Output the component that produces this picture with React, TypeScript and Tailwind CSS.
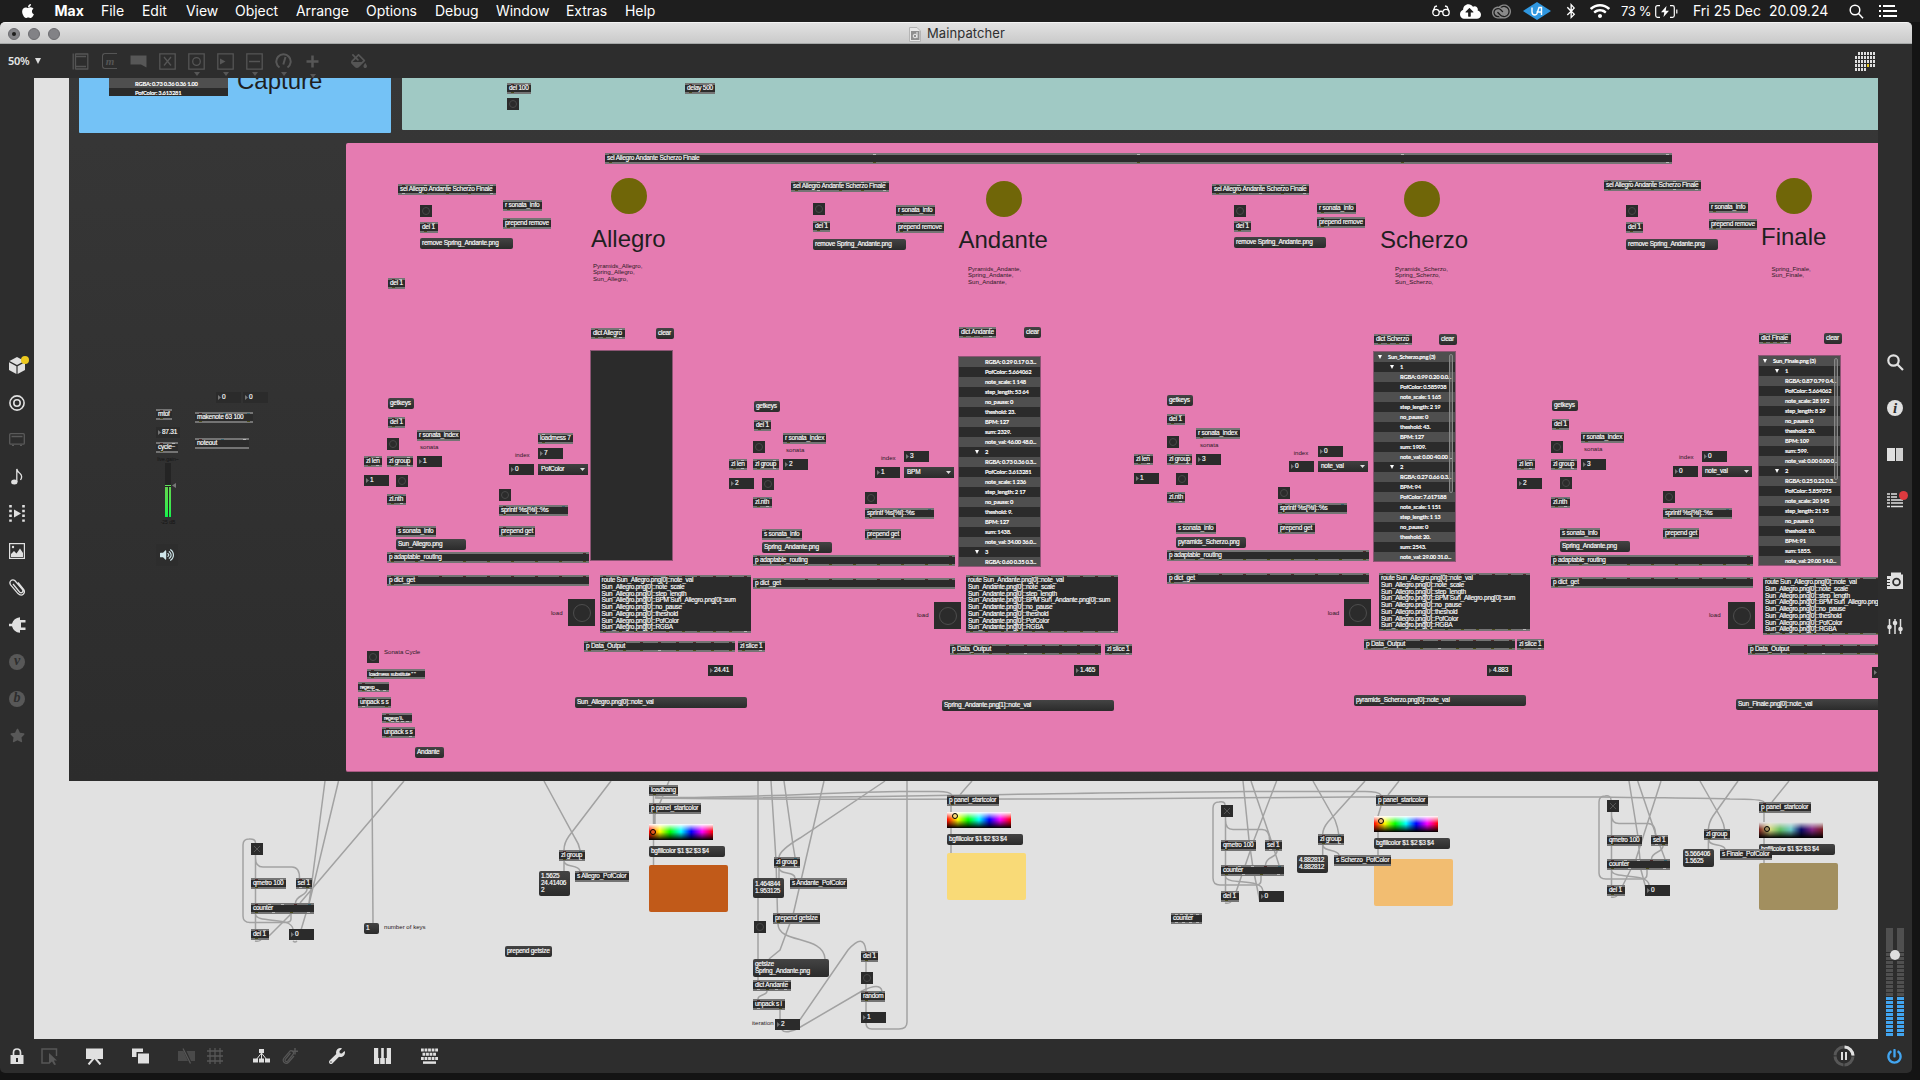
import React from "react";
import {
  FaApple, FaBluetoothB, FaWifi, FaStar, FaWrench, FaPowerOff, FaVolumeUp, FaCloudUploadAlt, FaFillDrip,
} from "react-icons/fa";
import { SiAdobecreativecloud } from "react-icons/si";

/* ---------- patch data ---------- */

type Kind = "obj" | "msg" | "num" | "bang" | "toggle" | "menu" | "note";
interface Item {
  k: Kind;
  x: number;
  y: number;
  w: number;
  h: number;
  t: string;
  ins: string;
  outs: string;
  small?: boolean;
}

const o = (x: number, y: number, w: number, t: string, ins = "h", outs = "y", h = 11, small = false): Item => ({ k: "obj", x, y, w, h, t, ins, outs, small });
const m = (x: number, y: number, w: number, t: string, h = 11): Item => ({ k: "msg", x, y, w, h, t, ins: "", outs: "" });
const n = (x: number, y: number, t: string, w = 25): Item => ({ k: "num", x, y, w, h: 11, t, ins: "", outs: "" });
const b = (x: number, y: number, s = 12): Item => ({ k: "bang", x, y, w: s, h: s, t: "", ins: "", outs: "" });
const tg = (x: number, y: number): Item => ({ k: "toggle", x, y, w: 12, h: 12, t: "", ins: "", outs: "" });
const u = (x: number, y: number, t: string): Item => ({ k: "menu", x, y, w: 50, h: 11, t, ins: "", outs: "" });
const c = (x: number, cy: number, t: string): Item => ({ k: "note", x, y: cy - 3, w: 90, h: 7, t, ins: "", outs: "" });

const SEL = "sel Allegro Andante Scherzo Finale";
const REM = "remove Spring_Andante.png";
const route = (name: string) =>
  [
    `route Sun_${name}.png[0]::note_val`,
    `Sun_${name}.png[0]::note_scale`,
    `Sun_${name}.png[0]::step_length`,
    `Sun_${name}.png[0]::BPM Sun_${name}.png[0]::sum`,
    `Sun_${name}.png[0]::no_pause`,
    `Sun_${name}.png[0]::theshold`,
    `Sun_${name}.png[0]::PofColor`,
    `Sun_${name}.png[0]::RGBA`,
  ].join("\n");

const H9 = "hhhhhhhhh";
const H10 = "hhhhhhhhhh";
const Y9 = "yyyyyyyyy";
const YD = "yyyycyyyy";
const Y10 = "yyyyyyyyyc";

const items: Item[] = [
  // top strip
  o(507, 83, 24, "del 100", "hc"), b(507, 98), o(685, 83, 30, "delay 500", "hc"),
  o(605, 153, 1067, SEL, "hcccc", "yyyyc"),

  // selectors
  o(398, 184, 98, SEL, "hcccc", "cyyyc"), b(420, 205), o(420, 222, 18, "del 1", "hc"), m(420, 238, 93, REM),
  o(503, 200, 39, "r sonata_info", ""), o(503, 218, 48, "prepend remove"), o(388, 278, 17, "del 1", "hc"),
  o(791, 181, 98, SEL, "hcccc", "ycyyc"), b(813, 203), o(813, 221, 17, "del 1", "hc"), m(813, 239, 93, REM),
  o(896, 205, 39, "r sonata_info", ""), o(896, 222, 48, "prepend remove"),
  o(1212, 184, 97, SEL, "hcccc", "yycyc"), b(1234, 205), o(1234, 221, 17, "del 1", "hc"), m(1234, 237, 92, REM),
  o(1317, 203, 39, "r sonata_info", ""), o(1317, 217, 48, "prepend remove"),
  o(1604, 180, 97, SEL, "hcccc", "yyycc"), b(1626, 205), o(1626, 222, 17, "del 1", "hc"), m(1626, 239, 92, REM),
  o(1709, 202, 39, "r sonata_info", ""), o(1709, 219, 48, "prepend remove"),

  // dictionaries
  o(591, 328, 34, "dict Allegro", "hc", "yyyc"), m(656, 328, 17.5, "clear"),
  o(959, 327, 36.5, "dict Andante", "hc", "yyyc"), m(1024, 327, 17, "clear"),
  o(1374, 334, 38, "dict Scherzo", "hc", "yyyc"), m(1439, 334, 17.5, "clear"),
  o(1759, 333, 32, "dict Finale", "hc", "yyyc"), m(1824, 333, 17.5, "clear"),
  c(593, 265.7, "Pyramids_Allegro,\nSpring_Allegro,\nSun_Allegro,"),
  c(968, 268.5, "Pyramids_Andante,\nSpring_Andante,\nSun_Andante,"),
  c(1395, 268.5, "Pyramids_Scherzo,\nSpring_Scherzo,\nSun_Scherzo,"),
  c(1771.5, 268.5, "Spring_Finale,\nSun_Finale,"),

  // synth
  n(216, 392, "0"), n(243, 392, "0"), o(156, 409, 16, "mtof"), o(195, 412, 58, "makenote 63 100", "hbb", "yy"),
  n(156, 427, "87.31", 24), o(195, 438, 54, "noteout", "hbc", ""), o(156, 442, 22, "cycle~", "hc"),

  // column 1
  m(388, 398, 26, "getkeys"), o(388, 417, 17, "del 1", "hc"), o(417, 430, 43, "r sonata_index", ""), b(387, 438),
  c(420, 447, "sonata"), o(364, 456, 18, "zl len", "hc", "yc"), o(387, 456, 26, "zl group", "hc", "yc"), n(417, 456, "1"),
  n(364, 475, "1"), b(396, 475), o(387, 494, 19, "zl.nth", "hb", "yc"),
  o(538, 433, 35, "loadmess 7", "c"), n(538, 448, "7"), c(515, 455.3, "index"), n(509, 464, "0"), u(538, 464, "PofColor"),
  b(499, 489), o(499, 505, 69, "sprintf %s[%i]::%s", "hbb"), o(499, 526, 36, "prepend get"), o(396, 526, 40, "s sonata_info", "h", ""),
  m(396, 539, 70, "Sun_Allegro.png"), o(387, 552, 202, "p adaptable_routing", "hh", Y9), o(387, 575, 202, "p dict_get", H9),
  c(551, 612.7, "load"), b(568, 599, 27), o(599.5, 575, 151.5, route("Allegro"), H10, Y10, 58),
  o(584, 641, 151, "p Data_Output", H9, YD), o(738, 641, 27, "zl slice 1", "hc", "yc"), n(708, 665, "24.41"),
  m(575, 697, 172, "Sun_Allegro.png[0]::note_val"),
  b(367, 651), c(384, 652.3, "Sonata Cycle"), o(367, 669, 58, 'loadmess substitute " "', "h", "y", 10, true),
  o(358, 682, 31, "regexp _", "h", "ycccc", 10, true), o(358, 697, 33, "unpack s s", "h", "cy"),
  o(382, 713, 30, "regexp \\\\.", "h", "ycccc", 10, true), o(382, 727, 33, "unpack s s", "h", "yc"), m(415, 747, 29, "Andante"),

  // column 2
  m(754, 401, 26, "getkeys"), o(754, 420, 17, "del 1", "hc"), b(753, 441), o(783, 433, 43, "r sonata_index", ""),
  c(786, 450.3, "sonata"), o(729, 459, 18, "zl len", "hc", "yc"), o(753, 459, 26, "zl group", "hc", "yc"), n(783, 459, "2"),
  n(729, 478, "2"), b(762, 478), o(753, 497, 19, "zl.nth", "hb", "yc"),
  o(762, 529, 40, "s sonata_info", "h", ""), m(762, 542, 70, "Spring_Andante.png"),
  o(753, 555, 202, "p adaptable_routing", "hh", Y9), o(753, 578, 202, "p dict_get", H9),
  c(881, 458.3, "index"), n(904, 451, "3"), n(875, 467, "1"), u(904, 467, "BPM"), b(865, 492),
  o(865, 508, 69, "sprintf %s[%i]::%s", "hbb"), o(865, 529, 36, "prepend get"), c(917, 614.7, "load"), b(934, 602, 27),
  o(966, 575, 151.5, route("Andante"), H10, Y10, 58), o(950, 644, 151, "p Data_Output", H9, YD),
  o(1105, 644, 27, "zl slice 1", "hc", "yc"), n(1074, 665, "1.465"), m(942, 700, 172, "Spring_Andante.png[1]::note_val"),

  // column 3
  m(1167, 395, 26, "getkeys"), o(1167, 414, 18, "del 1", "hc"), b(1167, 436), o(1196, 428, 44, "r sonata_index", ""),
  c(1200, 445.3, "sonata"), o(1134, 454, 19, "zl len", "hc", "yc"), o(1167, 454, 25, "zl group", "hc", "yc"), n(1196, 454, "3"),
  n(1134, 473, "1"), b(1176, 473), o(1167, 492, 18, "zl.nth", "hb", "yc"),
  c(1293.7, 453.3, "index"), n(1318, 446, "0"), n(1289, 461, "0"), u(1318, 461, "note_val"), b(1278, 487),
  o(1278, 503, 69, "sprintf %s[%i]::%s", "hbb"), o(1278, 523, 37, "prepend get"), o(1176, 523, 40, "s sonata_info", "h", ""),
  m(1176, 537, 70, "pyramids_Scherzo.png"), o(1167, 550, 202, "p adaptable_routing", "hh", Y9), o(1167, 573, 202, "p dict_get", H9),
  c(1327.7, 613.3, "load"), b(1344, 599, 27), o(1379, 573, 151, route("Allegro"), H10, Y10, 58),
  o(1364, 639, 151, "p Data_Output", H9, YD), o(1517, 639, 27, "zl slice 1", "hc", "yc"), n(1487, 665, "4.883"),
  m(1354, 695, 172, "pyramids_Scherzo.png[0]::note_val"),

  // column 4
  m(1552, 400, 26, "getkeys"), o(1552, 419, 17, "del 1", "hc"), b(1551, 441), o(1581, 432, 43, "r sonata_index", ""),
  c(1584, 449.3, "sonata"), o(1517, 459, 18, "zl len", "hc", "yc"), o(1551, 459, 26, "zl group", "hc", "yc"), n(1581, 459, "3"),
  n(1517, 478, "2"), b(1560, 477), o(1551, 497, 19, "zl.nth", "hb", "yc"),
  o(1560, 528, 40, "s sonata_info", "h", ""), m(1560, 541, 70, "Spring_Andante.png"),
  o(1551, 555, 202, "p adaptable_routing", "hh", Y9), o(1551, 577, 202, "p dict_get", H9),
  c(1679, 457.3, "index"), n(1702, 451, "0"), n(1673, 466, "0"), u(1702, 466, "note_val"), b(1663, 491),
  o(1663, 508, 69, "sprintf %s[%i]::%s", "hbb"), o(1663, 528, 36, "prepend get"), c(1709, 614.7, "load"), b(1728, 602, 27),
  o(1763, 577, 151, route("Allegro"), H10, Y10, 58), o(1748, 644, 151, "p Data_Output", H9, YD), n(1872, 667, ""),
  m(1736, 699, 172, "Sun_Finale.png[0]::note_val"),

  // lower patch, left
  tg(251, 843), o(251, 878, 35, "qmetro 100", "hc"), o(295.5, 878, 16.5, "sel 1", "hc", "cy"),
  o(251, 903, 63, "counter", "hcchb", "ycyc"), o(251, 929, 18, "del 1", "hc"), n(289, 929, "0"),
  m(364, 923, 15, "1"), c(384, 927.3, "number of keys"),
  o(559, 850, 26, "zl group", "hb", "yc"), m(539, 871, 30.5, "1.5625\n24.41406\n2", 24.5), o(575, 871, 54, "s Allegro_PofColor", "h", ""),
  m(505, 946, 47, "prepend getsize"),
  o(649, 785, 29, "loadbang", ""), o(649, 803, 52, "p panel_startcolor"), m(649, 846, 76, "bgfillcolor $1 $2 $3 $4"),
  o(774, 857, 26, "zl group", "hb", "yc"), m(753, 878, 31, "1.464844\n1.953125", 20), o(790, 878, 57, "s Andante_PofColor", "h", ""),
  o(773, 913, 47, "prepend getsize"), b(754, 921), m(753, 959, 76, "getsize\nSpring_Andante.png", 17.5),
  o(753, 980, 38, "dict Andante", "hc", "cycc"), o(753, 999, 32, "unpack s i", "h", "cy"), c(752, 1023.3, "iteration"), n(775, 1019, "2"),
  o(861, 951, 17, "del 1", "hc"), b(861, 972), o(861, 991, 24, "random", "hb"), n(861, 1012, "1"),
  o(947, 795, 52, "p panel_startcolor"), m(947, 834, 76, "bgfillcolor $1 $2 $3 $4"),

  // lower patch, right
  tg(1221, 805), o(1221, 840, 35, "qmetro 100", "hc"), o(1265, 840, 17, "sel 1", "hc", "cy"),
  o(1221, 865, 63, "counter", "hcchb", "ycyc"), o(1221, 891, 18, "del 1", "hc"), n(1258.5, 891, "0"),
  o(1171, 913, 31, "counter", "ccccc", "cccc"),
  o(1318, 834, 26, "zl group", "hb", "yc"), m(1297, 855, 31, "4.882812\n4.882812", 17.5),
  o(1376, 795, 52, "p panel_startcolor"), m(1374, 838, 76, "bgfillcolor $1 $2 $3 $4"), o(1334, 855, 57, "s Scherzo_PofColor", "h", ""),
  tg(1607, 800), o(1607, 835, 35, "qmetro 100", "hc"), o(1651, 835, 17, "sel 1", "hc", "cy"),
  o(1607, 859, 63, "counter", "hcchb", "ycyc"), o(1607, 885, 18, "del 1", "hc"), n(1645, 885, "0"),
  o(1704, 829, 26, "zl group", "hb", "yc"), m(1683, 849, 31, "5.566406\n1.5625", 17.5),
  o(1759, 802, 52, "p panel_startcolor"), m(1759, 844, 76, "bgfillcolor $1 $2 $3 $4"), o(1720, 849, 52, "s Finale_PofColor", "h", ""),
];

const cables = [
  "M291 914V919Q291 922.5 285 922.5H250Q243 922.5 243 916V845Q243 839 249 839Q255.5 838.5 255.5 843",
  "M255.5 855V878M255.5 858Q255.5 867 263 867H292Q299.5 867 299.5 878",
  "M255.5 889V903M255.5 914V929M255.5 914C256 924 291 916 293 929",
  "M307 889C307 896 296 895 295.5 903M325 781L311 889L309 903M338.5 781L310 900L301 930M404 781L300 903M291 914L269 936",
  "M372 781L373 923M255 941Q258 942 261 940",
  "M544 781L575 838Q579 844 580 850M611 781L569 836Q564 843 564 850M564 861V871M564 861C564 868 579 864 580 871",
  "M669 781L655 815V824M653.5 796V803M653.5 814V865",
  "M655 797C700 800 850 791.5 900 791.5H938Q950 791.5 952 795",
  "M655 797.5C720 800 900 796 1100 793L1250 791.5H1365Q1379 791.5 1381 795",
  "M655 798C800 800 1000 799 1100 799L1350 797H1600C1660 798 1700 798 1730 799Q1763 799 1764 802",
  "M758 781V921M758 933V980M771 781L776 860L777.5 913M784 781L793 845L795 857M824 781L793 915L780 950L769 959",
  "M885 781L800 838Q780 850 779 857M779 868V878M779 868C779 875 795 871 795 878",
  "M778 924C778 944 824 935 825 959M767 991C767 996 758 994 758 999M780 1010V1019",
  "M782 1030Q785 1034 797 1029L862 991Q880 982 882 991M797 1024L848 950Q864 932 866 951",
  "M866 962V972M866 984V991M866 1002V1012M866 1023Q866 1029 872 1029H899Q907 1029 907 1022V781",
  "M972 781Q962 792 960 795M951 806V853",
  "M1261 876V880Q1261 885 1256 885H1220Q1213 885 1213 878V808Q1213 802 1219 802Q1225 801 1225 805",
  "M1225.5 817V840M1225.5 820Q1225.5 829.5 1233 829.5H1262Q1269.5 829.5 1269.5 840M1225.5 851V865M1225.5 876V891M1225.5 876C1226 886 1262 877 1263 891",
  "M1243 781L1249 840L1253 868L1260 902M1251 781L1270 837L1279 865M1276.6 781L1254 840L1236 892M1277 851C1277 858 1266 856 1265.5 865",
  "M1313 781L1335 820Q1338 828 1338.7 834M1365 781L1328 822Q1323 828 1322.7 834M1322.7 845V855M1323 845C1323 852 1338 849 1339 855",
  "M1399 781L1388 795M1381 806L1378 816V859",
  "M1647 870V874Q1647 879 1642 879H1606Q1599 879 1599 873V802Q1599 796 1605 796Q1611 795 1611 800",
  "M1611.5 812V835M1611.5 815Q1611.5 823.5 1619 823.5H1648Q1655.5 823.5 1655.5 835M1611.5 846V859M1611.5 870V885M1611.5 870C1612 880 1648 872 1649 885",
  "M1629 781L1637.7 835L1641 870L1648 896M1637.7 781L1656 835L1665 859M1661 781L1636 859L1622 887M1663 846C1663 853 1652 851 1651.5 859",
  "M1700 781L1721 818Q1724 824 1724.5 829M1738 781L1713 816Q1709 822 1708.4 829M1708.4 840V849M1709 840C1709 847 1724 843 1725 849",
  "M1789 781L1772 802M1764 813V863",
  "M293 941Q295 943 297 941M1225 903Q1228 904 1231 902M1611 897Q1614 898 1617 896",
];

/* ---------- node views ---------- */

const DOT: Record<string, string> = {
  h: "bg-[#4d2b2b]",
  y: "bg-[#4c4d1c]",
  c: "bg-[#b8b8b8]",
  b: "bg-[#35616e]",
};

function Strip({ dots, edge }: { dots: string; edge: "items-end" | "items-start" }) {
  return (
    <div className={`flex h-[2px] shrink-0 justify-between bg-[#747474] px-[3.5px] ${edge}`}>
      {dots.split("").map((d, i) => (
        <i key={i} className={`block h-[1px] w-[3px] ${DOT[d]}`} />
      ))}
    </div>
  );
}

function Node({ it }: { it: Item }) {
  const box = { left: it.x, top: it.y, width: it.w, height: it.h };
  const txt = "whitespace-pre text-[6.5px] leading-[6.75px] tracking-[-0.25px] text-white [-webkit-text-stroke:0.15px_#fff]";
  switch (it.k) {
    case "obj":
      return (
        <div className="absolute flex flex-col bg-[#2b2b2b]" style={box}>
          <Strip dots={it.ins} edge="items-end" />
          <div className={`flex min-h-0 grow items-center pl-[2px] ${txt}`}>
            <span className={it.small ? "text-[5.2px]" : ""}>{it.t}</span>
          </div>
          <Strip dots={it.outs} edge="items-start" />
        </div>
      );
    case "msg":
      return (
        <div className={`absolute flex items-center rounded-[2px] bg-linear-to-b from-[#444] to-[#2b2b2b] pl-[2px] ${txt}`} style={box}>
          {it.t}
        </div>
      );
    case "num":
      return (
        <div className={`absolute flex items-center gap-[1px] bg-[#2b2b2b] pl-[2px] ${txt}`} style={box}>
          <svg className="h-[5px] w-[3px] shrink-0" viewBox="0 0 3 5"><path d="M0 0L3 2.5L0 5Z" fill="#777" /></svg>
          {it.t}
        </div>
      );
    case "menu":
      return (
        <div className={`absolute flex items-center justify-between bg-linear-to-b from-[#404040] to-[#2b2b2b] pr-[3px] pl-[3px] ${txt}`} style={box}>
          {it.t}
          <svg className="h-[3px] w-[5px]" viewBox="0 0 5 3"><path d="M0 0H5L2.5 3Z" fill="#ddd" /></svg>
        </div>
      );
    case "bang":
      return (
        <div className="absolute flex items-center justify-center bg-[#2b2b2b]" style={box}>
          <div className={it.w > 20 ? "size-[18px] rounded-full border-[1.5px] border-[#4d4d4d]" : "size-[8px] rounded-full border border-[#484848]"} />
        </div>
      );
    case "toggle":
      return (
        <div className="absolute flex items-center justify-center bg-[#2b2b2b]" style={box}>
          <svg className="size-[6px]" viewBox="0 0 6 6"><path d="M0 0L6 6M6 0L0 6" stroke="#5a5a5a" strokeWidth="0.9" /></svg>
        </div>
      );
    default:
      return (
        <div className="absolute text-[6.1px] leading-[6.75px] whitespace-pre text-[#2c1a24]" style={{ left: it.x, top: it.y }}>
          {it.t}
        </div>
      );
  }
}

/* A row starting with "v" is an expanded key; its digit tells the level. */
const dictAndante = [
  "RGBA: 0.29 0.17 0.3...", "PofColor: 5.664062", "note_scale: 1 148", "step_length: 53 64", "no_pause: 0", "theshold: 23.",
  "BPM: 127", "sum: 2329.", "note_val: 46.00 48.0...", "v1 2", "RGBA: 0.73 0.36 0.3...", "PofColor: 3.613281", "note_scale: 1 236",
  "step_length: 2 17", "no_pause: 0", "theshold: 9.", "BPM: 127", "sum: 1438.", "note_val: 34.00 36.0...", "v1 3", "RGBA: 0.60 0.35 0.3...",
];
const dictScherzo = [
  "v0 Sun_Scherzo.png (3)", "v1 1", "RGBA: 0.99 0.20 0.0...", "PofColor: 0.585938", "note_scale: 1 165", "step_length: 2 19",
  "no_pause: 0", "theshold: 43.", "BPM: 127", "sum: 1909.", "note_val: 0.00 40.00 ...", "v1 2", "RGBA: 0.27 0.66 0.3...", "BPM: 94",
  "PofColor: 7.617188", "note_scale: 1 151", "step_length: 1 13", "no_pause: 0", "theshold: 20.", "sum: 2543.", "note_val: 29.00 31.0...",
];
const dictFinale = [
  "v0 Sun_Finale.png (3)", "v1 1", "RGBA: 0.87 0.79 0.4...", "PofColor: 5.664062", "note_scale: 28 192", "step_length: 8 29",
  "no_pause: 0", "theshold: 20.", "BPM: 109", "sum: 599.", "note_val: 0.00 0.00 0...", "v1 2", "RGBA: 0.25 0.22 0.3...",
  "PofColor: 5.859375", "note_scale: 20 145", "step_length: 21 35", "no_pause: 0", "theshold: 10.", "BPM: 91", "sum: 1855.", "note_val: 29.00 14.0...",
];

function DictView({ x, y, rows, thumb = 0, w = 81, h = 209 }: { x: number; y: number; rows: string[]; thumb?: number; w?: number; h?: number }) {
  return (
    <div className="absolute overflow-hidden bg-[#2b2b2b] outline-1 outline-[#8d5574]" style={{ left: x, top: y, width: w, height: h }}>
      {rows.map((r, i) => {
        const key = r.startsWith("v");
        const pad = key ? (r[1] === "0" ? "pl-[4px]" : "pl-[16px]") : "pl-[26px]";
        return (
          <div key={i} className={`flex h-[10px] items-center font-[Lato] text-[5.8px] font-bold tracking-[-0.24px] whitespace-pre text-white [-webkit-text-stroke:0.1px_#fff] ${pad} ${i % 2 ? "bg-[#2b2b2b]" : "bg-[#4f4f4f]"}`}>
            {key && <svg className="mr-[6px] h-[4px] w-[4px]" viewBox="0 0 4 4"><path d="M0 0H4L2 4Z" fill="#fff" /></svg>}
            {key ? r.slice(3) : r}
          </div>
        );
      })}
      {thumb > 0 && <div className="absolute top-[2px] right-[2px] w-[4px] rounded-full border-[0.5px] border-[#888] bg-[#777]/40" style={{ height: thumb }} />}
    </div>
  );
}

const swatches = [
  { x: 649, y: 824, mx: 4.4, my: 8.3, fill: "#e4551b", dull: false },
  { x: 947, y: 812, mx: 8, my: 4, fill: "#f9da77", dull: false },
  { x: 1374, y: 816, mx: 6.5, my: 4.5, fill: "#f2bd71", dull: false },
  { x: 1759, y: 822, mx: 7.5, my: 7, fill: "#a28f5f", dull: true },
];

const plates = [
  { x: 649, y: 865, c: "#c15a19" },
  { x: 947, y: 853, c: "#f9da77" },
  { x: 1374, y: 859, c: "#f2bd71" },
  { x: 1759, y: 863, c: "#a28f5f" },
];

const titles = [
  { t: "Capture", x: 237, y: 69 },
  { t: "Allegro", x: 591, y: 227 },
  { t: "Andante", x: 958.5, y: 227.7 },
  { t: "Scherzo", x: 1380, y: 227.7 },
  { t: "Finale", x: 1761, y: 224.7 },
];

const lamps = [[611, 177.5], [985.5, 180.5], [1403.5, 180.5], [1775.5, 177.5]];

function Patch() {
  return (
    <div className="absolute top-[-78px] left-[-34px] h-[1080px] w-[1920px] font-['Liberation_Sans',Arial,sans-serif]">
      <svg className="absolute inset-0" width="1920" height="1080" fill="none" stroke="#a2a2a2" strokeWidth="1.5">
        {cables.map((d, i) => <path key={i} d={d} />)}
      </svg>
      <div className="absolute top-[78px] left-[69px] h-[703px] w-[1820px] bg-linear-to-b from-[#373737] to-[#2c2c2c]" />
      <div className="absolute top-[70px] left-[79px] h-[63px] w-[312px] rounded-[1px] bg-[#74c2f6]" />
      <div className="absolute top-[70px] left-[402px] h-[60px] w-[1500px] rounded-[1px] bg-[#a0c9c4]" />
      <div className="absolute top-[143px] left-[346px] h-[629px] w-[1560px] rounded-[2px] border-b border-[#a85a82] bg-[#e57bb1]" />
      {titles.map((s) => (
        <div key={s.t} className="absolute text-[24px] leading-none text-[#1f1f1f]" style={{ left: s.x, top: s.y }}>{s.t}</div>
      ))}
      {lamps.map(([x, y]) => (
        <div key={x} className="absolute size-[36px] rounded-full bg-[#706608]" style={{ left: x, top: y }} />
      ))}
      <div className="absolute top-[78px] left-[109px] h-[18px] w-[119px] overflow-hidden bg-[#2b2b2b] font-[Lato] text-[5.8px] font-bold tracking-[-0.24px] text-white [-webkit-text-stroke:0.1px_#fff]">
        <div className="flex h-[10px] items-center bg-[#4f4f4f] pt-px pl-[26px] leading-none">RGBA: 0.73 0.36 0.36 1.00</div>
        <div className="flex h-[10px] items-center pl-[26px] leading-none">PofColor: 3.613281</div>
      </div>
      <DictView x={591} y={351} rows={[]} />
      <DictView x={959} y={357} rows={dictAndante} />
      <DictView x={1374} y={352} rows={dictScherzo} thumb={139} />
      <DictView x={1759} y={356} rows={dictFinale} thumb={122} />
      {plates.map((p) => (
        <div key={p.x} className="absolute h-[47px] w-[79px] rounded-[2px]" style={{ left: p.x, top: p.y, background: p.c }} />
      ))}
      {swatches.map((s) => (
        <div key={s.x} className="absolute h-[16px] w-[64px]" style={{ left: s.x, top: s.y }}>
          <div className={`absolute inset-0 bg-[linear-gradient(to_bottom,#fff_0%,transparent_45%,transparent_50%,#000_100%),linear-gradient(to_right,#f00,#ff0_17%,#0f0_33%,#0ff_50%,#00f_66%,#f0f_83%,#f00)] ${s.dull ? "brightness-90 saturate-[0.4]" : ""}`} />
          <div className="absolute size-[6px] -translate-1/2 rounded-full border border-black" style={{ left: s.mx, top: s.my, background: s.fill }} />
        </div>
      ))}
      {items.map((it, i) => <Node key={i} it={it} />)}

      {/* gain slider */}
      <div className="absolute top-[456px] left-[156px] flex w-[24px] flex-col items-center text-[5px] leading-[6px] text-[#151515]">
        <span>live.gain~</span>
        <div className="relative mt-px h-[54px] w-[6px] bg-[#242424]">
          <div className="absolute top-[22px] h-px w-[6px] bg-[#5fe05a]" />
          <div className="absolute bottom-0 flex h-[30px] w-[6px] justify-between">
            <i className="w-[2.5px] bg-linear-to-b from-[#5fd64f] to-[#06f34c]" />
            <i className="w-[2.5px] bg-linear-to-b from-[#5fd64f] to-[#06f34c]" />
          </div>
          <svg className="absolute top-[20px] left-[7px]" width="4" height="5"><path d="M0 2.5L4 0V5Z" fill="#777" /></svg>
        </div>
        <span className="mt-[2px]">-25 dB</span>
      </div>
      <div className="absolute top-[544px] left-[156px] flex h-[22px] w-[22px] items-center justify-center bg-[#2d2d2d]">
        <FaVolumeUp className="size-[14px] text-[#cfe6ea]" />
      </div>
    </div>
  );
}

/* ---------- chrome ---------- */

const menus: [string, string][] = [
  ["File", "w-[41px]"], ["Edit", "w-[44px]"], ["View", "w-[49px]"], ["Object", "w-[61px]"], ["Arrange", "w-[70px]"],
  ["Options", "w-[69px]"], ["Debug", "w-[61px]"], ["Window", "w-[70px]"], ["Extras", "w-[59px]"], ["Help", "w-[40px]"],
];

function MenuBar() {
  return (
    <div className="flex h-[22px] shrink-0 items-center bg-[#1e1e1e] pl-[20px] text-[14px] leading-none text-white">
      <FaApple className="size-[16px] shrink-0" />
      <span className="ml-[18.5px] w-[46.5px] font-bold">Max</span>
      {menus.map(([t, w]) => <span key={t} className={`shrink-0 tracking-[-0.05px] ${w}`}>{t}</span>)}
      <div className="ml-auto flex items-center pr-[23px]">
        <svg width="18" height="12" viewBox="0 0 18 12" fill="none" stroke="#fff" strokeWidth="1.3">
          <circle cx="4" cy="7.5" r="3.2" /><circle cx="14" cy="7.5" r="3.2" /><path d="M7.2 7Q9 5.5 10.8 7M1 6.5L3 1.5L5 1M17 6.5L15 1.5L13 1" />
        </svg>
        <FaCloudUploadAlt className="ml-[10px] size-[21px]" />
        <SiAdobecreativecloud className="ml-[11px] size-[19px] text-[#8a8a8a]" />
        <svg className="ml-[12px]" width="28" height="18" viewBox="0 0 28 18">
          <path d="M14 0L28 9L14 18L0 9Z" fill="#2f97e0" />
          <path d="M9 5.5V10Q9 13 12 13Q14 13 14.5 10L16 5.5H18.5V13M13.5 10H18.5" fill="none" stroke="#fff" strokeWidth="1.4" />
        </svg>
        <FaBluetoothB className="ml-[12px] size-[16px]" />
        <FaWifi className="ml-[11px] size-[20px]" />
        <span className="ml-[11px] w-[34px] text-[13px] tracking-[-0.4px]">73 %</span>
        <svg width="23" height="13" viewBox="0 0 23 13" fill="none" stroke="#fff" strokeWidth="1.2">
          <path d="M5 .7H2.5Q.7 .7 .7 2.5V10.5Q.7 12.3 2.5 12.3H5M15 .7H17.5Q19.3 .7 19.3 2.5V10.5Q19.3 12.3 17.5 12.3H15" />
          <path d="M11.5 1L6 7.3H9.3L8.5 12L14 5.7H10.7Z" fill="#fff" stroke="none" /><path d="M21.8 4.5V8.5" />
        </svg>
        <span className="ml-[15px] w-[76px]">Fri 25 Dec</span>
        <span className="w-[80px]">20.09.24</span>
        <svg width="15" height="15" viewBox="0 0 15 15" fill="none" stroke="#fff" strokeWidth="1.5"><circle cx="6" cy="6" r="4.8" /><path d="M9.5 9.5L14 14.3" /></svg>
        <svg className="ml-[15px]" width="18" height="12" viewBox="0 0 18 12" stroke="#fff" strokeWidth="2"><path d="M4 1H16M4 6H18M4 11H18M0 1H2M0 6H2M0 11H2" /></svg>
      </div>
    </div>
  );
}

function TitleBar() {
  return (
    <div className="relative flex h-[22px] shrink-0 items-center justify-center gap-[6px] rounded-t-[5px] border-t border-b border-t-[#f4f4f4] border-b-[#a5a8a8] bg-linear-to-b from-[#e2e2e2] to-[#cacaca] pt-[2px] pl-[2px] text-[13px] text-[#2f2f2f]">
      <div className="absolute top-[5px] left-[8px] flex gap-[8px]">
        <i className="flex size-[12px] items-center justify-center rounded-full border border-[#6c6c70] bg-[#828286]"><i className="size-[4px] rounded-full bg-[#1c1c1c]" /></i>
        <i className="size-[12px] rounded-full border border-[#6c6c70] bg-[#828286]" />
        <i className="size-[12px] rounded-full border border-[#6c6c70] bg-[#828286]" />
      </div>
      <svg width="12" height="15" viewBox="0 0 12 15">
        <path d="M.5 .5H8L11.5 4V14.5H.5Z" fill="#e8e8e8" stroke="#b5b5b5" />
        <rect x="2" y="4" width="8.5" height="9" fill="#8f8f8f" /><circle cx="6" cy="9" r="1.8" fill="none" stroke="#eee" /><path d="M8 5V11" stroke="#eee" />
      </svg>
      <span className="tracking-[0.1px]">Mainpatcher</span>
    </div>
  );
}

const S = "fill-none stroke-[#555] stroke-[1.3]";

function ToolBar() {
  const wrap = (el: React.ReactNode, arrow = false) => (
    <div className="relative flex w-[29px] items-center justify-center">
      {el}
      {arrow && <svg className="absolute top-[19px]" width="6" height="4"><path d="M0 0H6L3 4Z" fill="#575757" /></svg>}
    </div>
  );
  return (
    <div className="flex h-[34px] shrink-0 items-center bg-[#2d2d2d] text-[#555]">
      <span className="w-[27px] pl-[8px] font-['Noto_Sans'] text-[11px] font-semibold tracking-[-0.3px] text-[#e6e6e6]">50%</span>
      <svg className="ml-[8px]" width="6" height="6"><path d="M0 0H6L3 6Z" fill="#ddd" /></svg>
      <div className="ml-[25px] flex h-[17px] items-center">
        {wrap(<svg className={S} width="17" height="17"><path d="M1.2 .5V16.5M3.5 .5V16.5M15.8 .5V16.5M3.5 1H16M3.5 3.5H14M3.5 13.5H14M3.5 16H16" /></svg>)}
        {wrap(<div className="flex h-[16px] w-[15px] items-center justify-center rounded-l-[3px] border border-r-0 border-[#555] font-['Liberation_Serif'] text-[11px] leading-none font-bold italic">m</div>)}
        {wrap(<svg width="17" height="13"><path d="M.5 .5H16.5V12.500L11 9.5H.5Z" fill="#575757" /></svg>)}
        {wrap(<svg className={S} width="17" height="17"><path d="M.8 .8H16.2V16.2H.8ZM5 4L12 12.5M12 4L5 12.5" /></svg>)}
        {wrap(<svg className={S} width="17" height="17"><path d="M.8 .8H16.2V16.2H.8Z" /><circle cx="8.5" cy="8.5" r="3.8" /></svg>, true)}
        {wrap(<svg className={S} width="17" height="17"><path d="M.8 .8H16.2V16.2H.8Z" /><path d="M3 5.5L8.5 8.5L3 11.5Z" className="fill-[#575757] stroke-none" /></svg>, true)}
        {wrap(<svg className={S} width="17" height="17"><path d="M.8 .8H16.2V16.2H.8ZM3 8.5H14" /></svg>, true)}
        {wrap(<svg className="fill-none stroke-[#575757] stroke-2" width="17" height="17"><path d="M4.500 14.500A7.200 7.200 0 1 1 12.500 14.500M8.3 11.500L10.500 4" /></svg>, true)}
        {wrap(<svg className="fill-none stroke-[#575757] stroke-[2.5]" width="13" height="13"><path d="M6.5 .5V12.5M.5 6.5H12.5" /></svg>, true)}
      </div>
      <FaFillDrip className="ml-[24px] size-[16px]" />
      <div className="mr-[37px] ml-auto grid grid-cols-7 gap-[1px]">
        {Array.from({ length: 35 }, (_, i) => (
          <i key={i} className={`h-[3px] w-[2px] ${i === 0 || i > 31 ? "bg-transparent" : i === 25 ? "bg-[#e8c81c]" : "bg-[#e0e0e0]"}`} />
        ))}
      </div>
    </div>
  );
}

function LeftBar() {
  const cell = "flex h-[37px] shrink-0 items-center justify-center";
  return (
    <div className="flex w-[34px] shrink-0 flex-col bg-[#2d2d2d] pt-[269px] text-[#e0e0e0]">
      <div className={`${cell} relative`}>
        <svg width="16" height="17" viewBox="0 0 16 17"><path d="M8 0L15.5 4L8 8L.5 4ZM0 5.3L7.4 9.2V17L0 13ZM16 5.3L8.6 9.2V17L16 13Z" fill="#e0e0e0" /></svg>
        <i className="absolute top-[9px] left-[21px] size-[8px] rounded-full bg-[#edc91f]" />
      </div>
      <div className={cell}><svg width="16" height="16" fill="none" stroke="#e0e0e0" strokeWidth="1.6"><circle cx="8" cy="8" r="7.1" /><circle cx="8" cy="8" r="3.2" /></svg></div>
      <div className={cell}><svg width="16" height="13" fill="none" stroke="#5a5a5a" strokeWidth="1.3"><rect x=".7" y=".7" width="14.6" height="10.5" rx="1" /><path d="M2.5 3.5H13.5M3 12.5H5M11 12.5H13" /></svg></div>
      <div className={cell}><svg width="12" height="17" viewBox="0 0 12 17"><ellipse cx="3.3" cy="14" rx="3.2" ry="2.5" fill="#e0e0e0" /><path d="M5.8 14V1Q6.5 4 9 5.5Q12 8 9.5 12" fill="none" stroke="#e0e0e0" strokeWidth="1.3" /></svg></div>
      <div className={cell}><svg width="16" height="17" viewBox="0 0 16 17"><path d="M1.5 0V17M14.5 0V17" stroke="#e0e0e0" strokeWidth="2.6" strokeDasharray="2.4 2.4" /><path d="M5 4.5L12 8.5L5 12.5Z" fill="#e0e0e0" /></svg></div>
      <div className={cell}><svg width="16" height="16" viewBox="0 0 16 16"><rect x=".6" y=".6" width="14.8" height="14.8" fill="none" stroke="#e0e0e0" strokeWidth="1.2" /><path d="M2 14V11L5 8L7.5 10.5L11 5.5L14 10V14Z" fill="#e0e0e0" /><circle cx="4" cy="4" r="1.2" fill="#e0e0e0" /></svg></div>
      <div className={cell}><svg width="16" height="17" viewBox="0 0 16 17" fill="none" stroke="#e0e0e0" strokeWidth="1.3"><path d="M4 5L10.5 13Q12 14.5 13.3 13.2Q14.6 12 13.3 10.3L6 1.8Q4 0 2 1.6Q0 3.5 1.6 5.8L9 14.6Q12 17.3 14.4 15Q16.3 13 14.6 10.4L9 3.5" /></svg></div>
      <div className={cell}><svg width="17" height="16" viewBox="0 0 17 16"><path d="M0 6.8H3Q4.5 1 11 .2V3H16.5V5.5H12V10.5H16.5V13H11V15.8Q4.5 15 3 9.2H0Z" fill="#e0e0e0" /></svg></div>
      {["v", "b"].map((t) => (
        <div key={t} className={cell}><i className="flex size-[16px] items-center justify-center rounded-full bg-[#585858] pb-px font-['Liberation_Serif'] text-[14px] leading-none font-bold text-[#2d2d2d] italic">{t}</i></div>
      ))}
      <div className={cell}><FaStar className="size-[15px] text-[#585858]" /></div>
    </div>
  );
}

function RightBar() {
  return (
    <div className="flex w-[34px] shrink-0 flex-col items-center bg-[#2d2d2d] pt-[276px] text-[#e0e0e0]">
      <svg className="shrink-0" width="17" height="17" fill="none" stroke="#e0e0e0" strokeWidth="2.2"><circle cx="6.5" cy="6.5" r="5.2" /><path d="M10 10L16 16" /></svg>
      <i className="mt-[29px] flex size-[16px] shrink-0 items-center justify-center rounded-full bg-[#e0e0e0] font-['Liberation_Serif'] text-[15px] leading-none font-bold text-[#2d2d2d]">i</i>
      <div className="mt-[32px] flex gap-px"><i className="h-[13px] w-[8px] bg-[#e0e0e0]" /><i className="h-[13px] w-[7px] bg-[#d0d0d0]" /></div>
      <div className="relative mt-[32px]">
        <svg width="16" height="15" stroke="#e0e0e0" strokeWidth="1.4"><path d="M0 1H3M4 1H10M0 4H3M4 4H10M0 7H3M4 7H16M0 10H3M4 10H16M0 13.5H3M4 13.5H16" /></svg>
        <i className="absolute top-[-2px] left-[12px] size-[9px] rounded-full bg-[#dc3a3f]" />
      </div>
      <svg className="mt-[64px] shrink-0" width="16" height="17" viewBox="0 0 16 17"><path d="M4 2.5V.5H14V2.5H16V17H0V14H3V13H0V11H3V10H0V8H3V7H0V4H4Z" fill="#e0e0e0" /><circle cx="9.5" cy="10" r="3.4" fill="#e0e0e0" stroke="#2d2d2d" strokeWidth="1.8" /></svg>
      <svg className="mt-[29px] shrink-0" width="16" height="17" viewBox="0 0 16 17" stroke="#e0e0e0" strokeWidth="1.5"><path d="M2.5 1V16M8 1V16M13.5 1V16" /><g fill="#e0e0e0" stroke="none"><circle cx="2.5" cy="9" r="2.3" /><circle cx="8" cy="5" r="2.3" /><circle cx="13.5" cy="11" r="2.3" /></g></svg>
      <div className="relative mt-[293px] flex gap-[4px]">
        {[0, 1].map((k) => (
          <div key={k} className="flex w-[7px] flex-col gap-px">
            <i className="h-[24px] bg-[#505050]" />
            {Array.from({ length: 21 }, (_, i) => <i key={i} className={`h-[3px] ${i < 11 ? "bg-[#505050]" : "bg-[#42a5f0]"}`} />)}
          </div>
        ))}
        <i className="absolute top-[22px] left-[4px] size-[10px] rounded-full bg-[#e0e0e0]" />
      </div>
    </div>
  );
}

function BottomBar() {
  const at = "flex w-[20px] items-center justify-center";
  return (
    <div className="flex h-[34px] shrink-0 items-center bg-[#2d2d2d] pl-[7px] text-[#e0e0e0]">
      <div className={at}>
        <svg width="14" height="16" viewBox="0 0 14 16"><path d="M3.5 8V4.5Q3.5 1 7 1T10.5 4.5V8" fill="none" stroke="#e0e0e0" strokeWidth="1.7" /><rect x=".5" y="7" width="13" height="9" fill="#e0e0e0" /><path d="M7 10V14" stroke="#2d2d2d" strokeWidth="2" /></svg>
      </div>
      <div className={`${at} ml-[12px]`}><svg width="17" height="17" viewBox="0 0 17 17"><path d="M8 15H1V1H15.5V8" fill="none" stroke="#575757" strokeWidth="1.5" /><path d="M8 5L16 12.5H12.800L15 16.500L13.200 17L11 13.500L8 16Z" fill="#575757" /></svg></div>
      <div className={`${at} ml-[25px]`}><svg width="17" height="17" viewBox="0 0 17 17"><path d="M0 .5H17V11H0Z" fill="#e0e0e0" /><path d="M8 10L2.5 16.5M9 10L14.5 16.5" stroke="#e0e0e0" strokeWidth="2" /></svg></div>
      <div className={`${at} ml-[26px]`}><svg width="17" height="16" viewBox="0 0 17 16"><path d="M0 .5H11V4H4.5V9H0Z" fill="#e0e0e0" /><path d="M6 5.5H17V15.5H6Z" fill="#e0e0e0" /></svg></div>
      <div className={`${at} ml-[26px]`}><svg width="17" height="16" viewBox="0 0 17 16"><path d="M0 3H5.500L10 13H0ZM8.500 3H17V13H13Z" fill="#4a4a4a" /><path d="M5 .5L12.500 15.5" stroke="#575757" strokeWidth="1.3" /></svg></div>
      <div className={`${at} ml-[9px]`}><svg width="16" height="16" stroke="#575757" strokeWidth="1.3"><path d="M3 0V16M8 0V16M13 0V16M0 3H16M0 8H16M0 13H16" /></svg></div>
      <div className={`${at} ml-[26px]`}><svg width="17" height="14" viewBox="0 0 17 14"><path d="M8.5 2V10M3 11L8.5 4L14 11" fill="none" stroke="#e0e0e0" /><path d="M6 0H11V4H6ZM0 9.5H5V13.5H0ZM6 9.5H11V13.5H6ZM12 9.5H17V13.5H12Z" fill="#e0e0e0" /></svg></div>
      <div className={`${at} ml-[9px]`}>
        <svg width="16" height="16" viewBox="0 0 16 16" fill="none" stroke="#575757" strokeWidth="1.2">
          <path d="M8.500 5L3.500 11Q2.500 12.500 3.600 13.300Q4.700 14 5.800 12.800L11 6.500Q12.300 4.500 10.500 3.200Q8.800 2 7.300 3.800L2 10Q.2 12.500 2.300 14.600Q4.600 16.300 6.800 14L12 8" />
          <path d="M13 0V6.500M9.800 3.200H16" strokeWidth="1.500" />
        </svg>
      </div>
      <div className={`${at} ml-[27px]`}><FaWrench className="size-[16px]" /></div>
      <div className={`${at} ml-[25px]`}><svg width="17" height="16" viewBox="0 0 17 16"><path d="M0 0H17V16H0Z" fill="#e0e0e0" /><path d="M5.7 9V16M11.3 9V16" stroke="#2d2d2d" /><path d="M4.200 0H7.200V10H4.200ZM9.800 0H12.800V10H9.800Z" fill="#2d2d2d" /></svg></div>
      <div className={`${at} ml-[27px]`}>
        <svg width="17" height="16" stroke="#e0e0e0" strokeWidth="3"><path d="M0 2H17" strokeDasharray="2.8 .75" /><path d="M1.5 6.3H15.5" strokeDasharray="2.8 .75" /><path d="M0 10.4H17" strokeDasharray="2.8 .75" /><path d="M2 14.6H15" strokeWidth="2.5" /></svg>
      </div>
      <svg className="ml-auto" width="22" height="22" viewBox="0 0 22 22" fill="none" strokeWidth="3">
        <circle cx="11" cy="11" r="9" stroke="#575757" strokeDasharray="13.1 1" strokeDashoffset="-0.5" />
        <path d="M11.5 2A9 9 0 0 1 20 10.5" stroke="#e0e0e0" /><path d="M9 7V15M13 7V15" stroke="#e0e0e0" strokeWidth="2" />
      </svg>
      <FaPowerOff className="mr-[10px] ml-[32px] size-[15px] text-[#42a5f0]" />
    </div>
  );
}

export default function App() {
  return (
    <div className="flex h-[1080px] w-[1920px] flex-col overflow-hidden bg-[#141414] font-[Inter,sans-serif]">
      <MenuBar />
      <div className="flex h-[1051px] w-[1912px] flex-col overflow-hidden rounded-b-[5px]">
        <TitleBar />
        <ToolBar />
        <div className="flex h-[961px]">
          <LeftBar />
          <div className="relative grow overflow-hidden bg-[#e1e1e1]"><Patch /></div>
          <RightBar />
        </div>
        <BottomBar />
      </div>
    </div>
  );
}
